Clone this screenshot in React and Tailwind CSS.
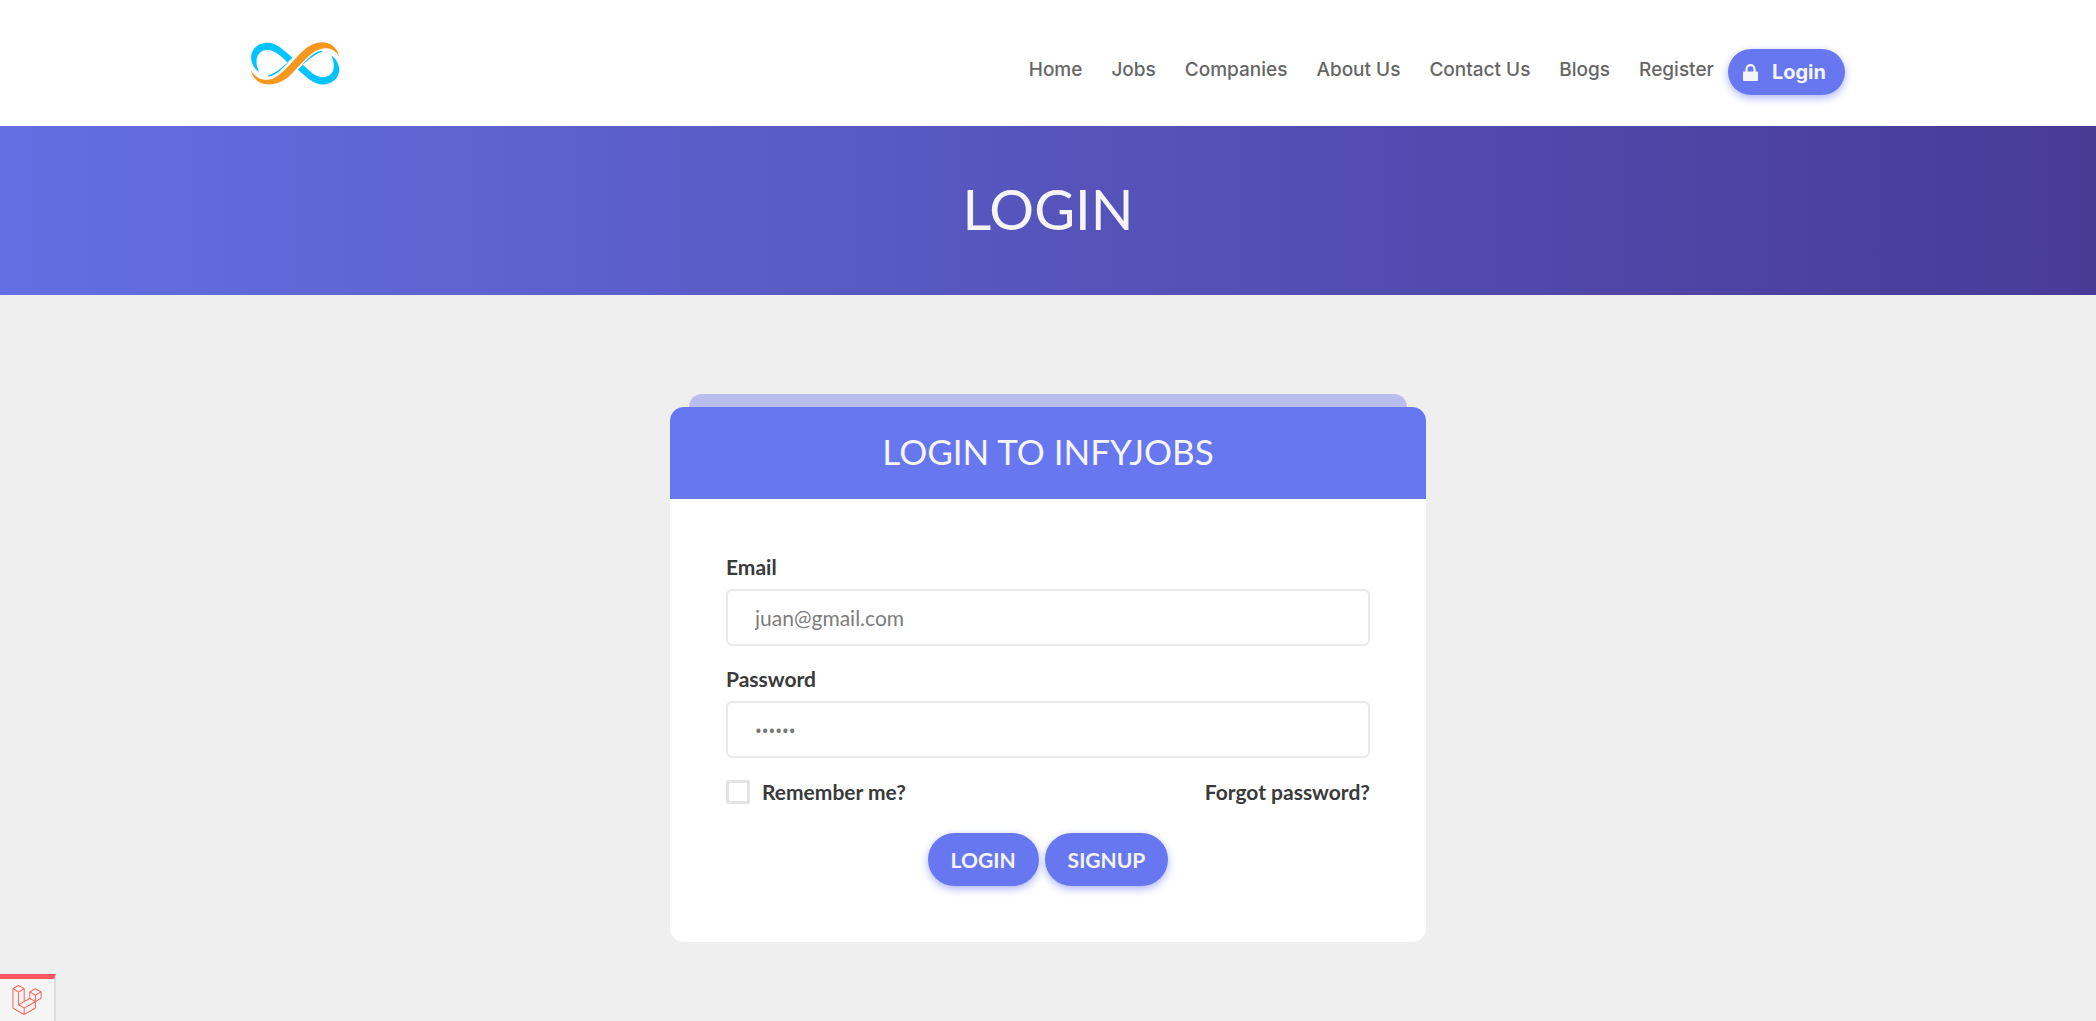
import React from "react";
import { SiLaravel } from "react-icons/si";

const links = ["Home", "Jobs", "Companies", "About Us", "Contact Us", "Blogs", "Register"];

function Logo() {
  const half =
    "M90 153C76 145 67 128 66 110C67 82 90 66 116 66C142 67 160 84 190 111L175 125C155 106 140 89 114 88C84 90 74 118 90 153ZM117 167C132 167 152 154 180 122C160 138 140 157 117 164Z";
  return (
    <svg viewBox="66 64 266 128" className="h-[43px] w-[89px]" role="img" aria-label="InfyJobs">
      <path d={half} fill="#00c4ff" />
      <path d={half} fill="#00c4ff" transform="rotate(180 198 128.5)" />
      <path
        d="M66 147C78 174 108 184 134 172C168 154 192 117 222 90C262 52 317 56 330 107C314 80 286 76 260 90C228 110 204 146 172 173C128 205 72 192 66 147Z"
        fill="#f7981d"
      />
    </svg>
  );
}

function LockIcon() {
  return (
    <svg viewBox="0 0 15 17" className="h-[17px] w-[15px]" aria-hidden="true">
      <path d="M3.5 8V5.200a4 4 0 0 1 8 0V8" fill="none" stroke="currentColor" strokeWidth="2.200" />
      <rect x="0" y="7.500" width="15" height="9.500" rx="1" fill="currentColor" />
    </svg>
  );
}

const pill =
  "rounded-full bg-[#6777ef] font-bold text-[#f4f4fb] shadow-[0_3px_8px_#acb5f6]";
const field =
  "h-[57px] w-full rounded-md border-2 border-[#e9e9e9] bg-white px-[27px] text-[#777] outline-none";

export default function App() {
  return (
    <div className="flex min-h-screen flex-col bg-[#efefef] font-['Lato',sans-serif] text-[#3a3a3a]">
      <header className="bg-white">
        <div className="mx-auto flex h-[126px] w-full max-w-[1594px] items-center justify-between">
          <a href="#home">
            <Logo />
          </a>
          <nav className="flex items-center gap-[29px] pt-[18px] font-['Inter',sans-serif] text-[19px] font-medium text-[#666]">
            {links.map((l) => (
              <a key={l} href="#nav" className="pb-1">{l}</a>
            ))}
            <a
              href="#login"
              className={`${pill} -ml-[15px] flex h-[46px] items-center gap-[14px] pr-[19px] pl-[15px] text-xl`}
            >
              <LockIcon />
              Login
            </a>
          </nav>
        </div>
      </header>

      <section className="flex h-[169px] items-center justify-center bg-[linear-gradient(90deg,#636fe2,#493a96)] pb-1">
        <h1 className="text-[56px] text-[#f5f5f7]">LOGIN</h1>
      </section>

      <main className="flex flex-col items-center px-4 pt-[99px] pb-20">
        <div className="h-[13px] w-full max-w-[718px] rounded-t-[13px] bg-[#b8bdee]" />
        <div className="w-full max-w-[756px] overflow-hidden rounded-[14px] bg-white">
          <h2 className="flex h-[92px] items-center justify-center bg-[#6777ef] pb-1 text-[35px] text-[#f5f5fa]">
            LOGIN TO INFYJOBS
          </h2>
          <form
            className="px-14 pt-[54px] pb-14 text-[21px] leading-7"
            onSubmit={(e) => e.preventDefault()}
          >
            <label htmlFor="email" className="block h-9 font-bold">Email</label>
            <input
              id="email"
              type="email"
              placeholder="juan@gmail.com"
              className={`${field} placeholder:text-[#7d7d7d]`}
            />
            <label htmlFor="password" className="mt-[19px] block h-9 font-bold">Password</label>
            <input
              id="password"
              type="password"
              defaultValue="secret"
              className={`${field} font-['Noto_Sans',sans-serif] text-lg`}
            />
            <div className="mt-5 flex items-center justify-between font-bold">
              <label className="flex items-center gap-3">
                <input
                  type="checkbox"
                  className="size-6 appearance-none rounded-xs border-[3px] border-[#e4e4e4] bg-white"
                />
                Remember me?
              </label>
              <a href="#forgot">Forgot password?</a>
            </div>
            <div className="mt-[27px] flex justify-center gap-[6px]">
              <button type="submit" className={`${pill} h-[53px] px-[23px]`}>LOGIN</button>
              <button type="button" className={`${pill} h-[53px] px-[23px]`}>SIGNUP</button>
            </div>
          </form>
        </div>
      </main>

      <button
        type="button"
        aria-label="Open debug bar"
        className="fixed bottom-0 left-0 flex h-[47px] w-14 items-center justify-center border-t-[5px] border-r-2 border-t-[#ff5661] border-r-[#ddd] bg-[#f5f5f5] text-[#ff5a50]"
      >
        <SiLaravel className="size-[30px]" />
      </button>
    </div>
  );
}
